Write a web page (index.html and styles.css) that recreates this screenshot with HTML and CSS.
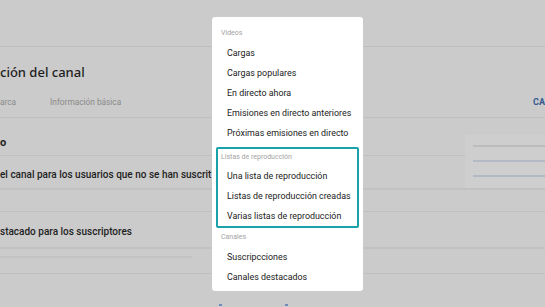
FILE: index.html
```html
<!DOCTYPE html>
<html lang="es">
<head>
    <meta charset="UTF-8"/>
    <meta content="width=device-width, initial-scale=1.0" name="viewport"/>
    <title>Personalización del canal</title>
    <link rel="stylesheet" href="styles.css">
</head>
<body>
    <div class="page">
        <div class="topbar"></div>

        <h1 class="title">ción del canal</h1>
        <div class="tabs">
            <span class="tab">arca</span>
            <span class="tab">Información básica</span>
            <span class="tab-action">CA</span>
        </div>

        <div class="section">
            <div class="section-head">o</div>
        </div>
        <div class="section">
            <div class="row-title">el canal para los usuarios que no se han suscrit</div>
            <div class="field"></div>
        </div>
        <div class="section">
            <div class="row-title second">stacado para los suscriptores</div>
            <div class="field second">
                <div class="field-bar"></div>
            </div>
        </div>
        <div class="footer-links">
            <span class="mark"></span>
            <span class="mark"></span>
        </div>

        <!-- channel preview card, sits over the right column -->
        <div class="preview">
            <div class="preview-line"></div>
            <div class="preview-line blue"></div>
            <div class="preview-line blue"></div>
        </div>
    </div>

    <!-- section picker dropdown -->
    <div class="menu">
        <div class="group-label">Videos</div>
        <div class="item">Cargas</div>
        <div class="item">Cargas populares</div>
        <div class="item">En directo ahora</div>
        <div class="item">Emisiones en directo anteriores</div>
        <div class="item">Próximas emisiones en directo</div>

        <div class="group focused">
            <div class="group-label">Listas de reproducción</div>
            <div class="item">Una lista de reproducción</div>
            <div class="item">Listas de reproducción creadas</div>
            <div class="item">Varias listas de reproducción</div>
        </div>

        <div class="group-label canales">Canales</div>
        <div class="item">Suscripcciones</div>
        <div class="item">Canales destacados</div>
    </div>
</body>
</html>
```

FILE: styles.css
```css
body {
    margin: 0;
    background: #cbcbcb;
    font-family: Roboto, Arial, sans-serif;
    color: #1e1e1e;
    overflow: hidden;
    height: 307px;
}
.page {
    position: relative;
    width: 545px;
    height: 307px;
    white-space: nowrap;
    overflow: hidden;
}
.topbar {
    height: 46px;
    border-bottom: 1px solid #bebebe;
}
.title {
    margin: 15px 0 0;
    font-family: "Noto Sans", Arial, sans-serif;
    font-size: 13px;
    font-weight: 500;
    line-height: 20px;
    height: 20px;
}
.tabs {
    display: flex;
    align-items: center;
    gap: 34px;
    box-sizing: border-box;
    height: 36px;
    padding-top: 5px;
    border-bottom: 1px solid #c0c0c0;
    font-size: 8.3px;
    color: #8a8a8a;
}
.tab-action {
    margin-left: auto;
    font-size: 9px;
    font-weight: 700;
    color: #35588f;
}
.section {
    border-bottom: 1px solid #c0c0c0;
}
.section-head {
    box-sizing: border-box;
    height: 37px;
    padding-top: 11px;
    display: flex;
    align-items: center;
    font-size: 11px;
    font-weight: 700;
}
.row-title {
    box-sizing: border-box;
    height: 32px;
    padding-top: 4px;
    display: flex;
    align-items: center;
    font-size: 10px;
    font-weight: 500;
}
.row-title.second {
    height: 35px;
    padding-top: 3px;
}
.field {
    box-sizing: border-box;
    height: 23px;
    border-top: 2px solid #c2c2c2;
}
.field.second {
    height: 26px;
    padding-top: 7px;
}
.field-bar {
    width: 192px;
    height: 2px;
    background: #c3c3c3;
}
.footer-links {
    position: relative;
    height: 33px;
}
.mark {
    position: absolute;
    top: 30px;
    left: 219px;
    width: 3px;
    height: 2px;
    background: #6f8cbc;
}
.mark + .mark {
    left: 285px;
}
.preview {
    position: absolute;
    left: 465px;
    top: 135px;
    width: 80px;
    height: 53px;
    box-sizing: border-box;
    padding: 10px 0 0 8px;
    background: #cecece;
}
.preview-line {
    height: 2px;
    margin-bottom: 13px;
    background: #bdbdbd;
}
.preview-line.blue {
    background: #b3bac6;
}

/* dropdown */
.menu {
    position: absolute;
    left: 212px;
    top: 17px;
    width: 151px;
    height: 274px;
    box-sizing: border-box;
    padding: 6px 4px 4px;
    background: #ffffff;
    border-radius: 3px;
    font-family: Roboto, Arial, sans-serif;
    white-space: nowrap;
}
.group-label {
    height: 20px;
    line-height: 20px;
    padding-left: 5px;
    font-size: 7px;
    color: #a3a3a3;
}
.item {
    height: 20px;
    line-height: 20px;
    padding-left: 11px;
    font-size: 8.9px;
    color: #212121;
}
.group {
    margin-top: 4px;
    border: 2px solid #1aa2ab;
    border-radius: 2px;
}
.group .group-label {
    height: 17px;
    line-height: 17px;
    padding-left: 3px;
}
.group .item {
    padding-left: 9px;
}
.group-label.canales {
    height: 19px;
    line-height: 19px;
}
```
